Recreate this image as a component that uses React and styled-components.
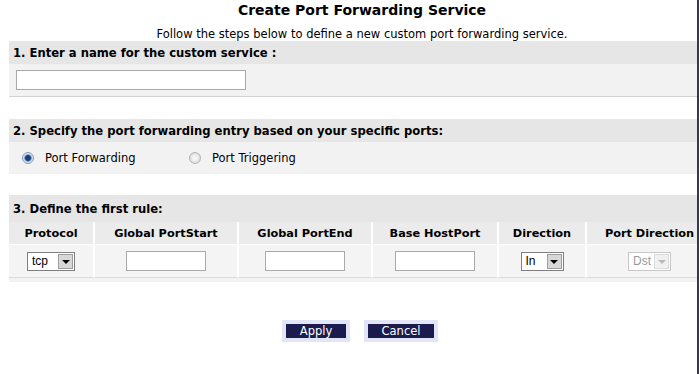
import React from 'react';
import styled, { createGlobalStyle } from 'styled-components';

const GlobalStyle = createGlobalStyle`
  html, body {
    margin: 0;
    padding: 0;
    background: #fff;
  }
  body {
    font-family: "DejaVu Sans", Verdana, sans-serif;
    font-size: 11.5px;
    color: #000;
  }
`;

const Page = styled.div`
  display: flex;
  height: 374px;
  width: 699px;
  overflow: hidden;
`;

const Main = styled.div`
  width: 688px;
  margin-left: 9px;
  display: flex;
  flex-direction: column;
  overflow: hidden;
`;

const Edge = styled.div`
  width: 2px;
  background: #343a4c;
`;

const Title = styled.h1`
  margin: 0;
  padding: 1px 0 0 18px;
  height: 23px;
  font-size: 14px;
  font-weight: bold;
  text-align: center;
  line-height: 18px;
`;

const Intro = styled.div`
  height: 14px;
  padding: 3px 0 0 18px;
  text-align: center;
  font-size: 11.5px;
  line-height: 14px;
`;

const Section = styled.section`
  margin-bottom: ${p => p.$gap || 0}px;
`;

const SectionHead = styled.div`
  height: ${p => p.$h || 23}px;
  background: #e6e6e6;
  display: flex;
  align-items: center;
  padding-left: 4px;
  font-weight: bold;
  font-size: 11.6px;
`;

const SectionBody = styled.div`
  background: #f2f2f2;
  height: ${p => p.$h}px;
  display: flex;
  align-items: center;
  padding-left: ${p => p.$pad || 0}px;
  border-bottom: ${p => (p.$line ? '1px solid #d2d2d2' : 'none')};
`;

const TextInput = styled.input`
  box-sizing: border-box;
  width: ${p => p.$w}px;
  height: ${p => p.$h || 20}px;
  border: 1px solid #a9a9a9;
  background: #fff;
  padding: 0 3px;
  margin: 0;
  font-family: "Liberation Sans", Arial, sans-serif;
  font-size: 12px;
`;

const RadioOption = styled.label`
  display: flex;
  align-items: center;
  gap: 11px;
  width: ${p => p.$w}px;
`;

const RadioDot = styled.span`
  box-sizing: border-box;
  width: 12px;
  height: 12px;
  border-radius: 50%;
  border: 1px solid ${p => (p.$on ? '#8597b0' : '#b4b4b4')};
  background: ${p =>
    p.$on
      ? 'radial-gradient(circle, #1b3f78 0 2.5px, #4d78b4 3px, #c5d2e4 4px, #eef2f8 5px)'
      : 'radial-gradient(circle, #f4f4f4 0 2px, #dcdcdc 5px)'};
`;

const Grid = styled.div`
  display: grid;
  grid-template-columns: 84px 144px 134px 126px 88px 127px;
  width: 703px;
  background: #f2f2f2;
  padding-bottom: 4px;
`;

const HeadCell = styled.div`
  height: 22px;
  display: flex;
  align-items: center;
  justify-content: center;
  background: #ebebeb;
  border-left: ${p => (p.$first ? 'none' : '2px solid #fff')};
  border-bottom: 1px solid #fff;
  font-weight: bold;
  font-size: 11.3px;
  white-space: nowrap;
`;

const DataCell = styled.div`
  height: 32px;
  display: flex;
  align-items: center;
  justify-content: center;
  background: #f4f4f4;
  border-left: ${p => (p.$first ? 'none' : '2px solid #fff')};
  border-bottom: 1px solid #dcdcdc;
`;

const SelectBox = styled.div`
  box-sizing: border-box;
  width: ${p => p.$w}px;
  height: 19px;
  border: 1px solid ${p => (p.$off ? '#c8c8c8' : '#7f7f7f')};
  background: #fff;
  display: flex;
  align-items: center;
  justify-content: space-between;
  padding: 1px 1px 1px 4px;
  font-family: "Liberation Sans", Arial, sans-serif;
  font-size: 12px;
  color: ${p => (p.$off ? '#9a9a9a' : '#000')};
`;

const ArrowBox = styled.span`
  box-sizing: border-box;
  width: 15px;
  height: 15px;
  display: flex;
  align-items: center;
  justify-content: center;
  background: ${p => (p.$off ? '#f0f0f0' : '#d8d8d8')};
  border: 1px solid ${p => (p.$off ? '#dcdcdc' : '#9c9c9c')};
  &::after {
    content: '';
    border-left: 4px solid transparent;
    border-right: 4px solid transparent;
    border-top: 4px solid ${p => (p.$off ? '#b8b8b8' : '#000')};
    margin-top: 1px;
  }
`;

const Actions = styled.div`
  display: flex;
  justify-content: center;
  gap: 14px;
  margin-top: 38px;
  padding-left: 14px;
`;

const Button = styled.button`
  box-sizing: border-box;
  width: ${p => p.$w}px;
  height: 22px;
  padding: 0;
  margin: 0;
  border: 4px solid #e2e5f5;
  background: #1b1b4d;
  color: #fff;
  font-family: "DejaVu Sans", Verdana, sans-serif;
  font-size: 11.5px;
  line-height: 14px;
  cursor: pointer;
`;

function Select({ value, width, disabled }) {
  return (
    <SelectBox $w={width} $off={disabled}>
      <span>{value}</span>
      <ArrowBox $off={disabled} />
    </SelectBox>
  );
}

const columns = ['Protocol', 'Global PortStart', 'Global PortEnd', 'Base HostPort', 'Direction', 'Port Direction'];

export default function App() {
  return (
    <>
      <GlobalStyle />
      <Page>
        <Main>
          <Title>Create Port Forwarding Service</Title>
          <Intro>Follow the steps below to define a new custom port forwarding service.</Intro>

          <Section $gap={22}>
            <SectionHead>1. Enter a name for the custom service :</SectionHead>
            <SectionBody $h={32} $pad={7} $line>
              <TextInput $w={230} $h={20} />
            </SectionBody>
          </Section>

          <Section $gap={21}>
            <SectionHead>2. Specify the port forwarding entry based on your specific ports:</SectionHead>
            <SectionBody $h={32} $pad={13}>
              <RadioOption $w={167}>
                <RadioDot $on />
                Port Forwarding
              </RadioOption>
              <RadioOption>
                <RadioDot />
                Port Triggering
              </RadioOption>
            </SectionBody>
          </Section>

          <Section>
            <SectionHead $h={27}>3. Define the first rule:</SectionHead>
            <Grid>
              {columns.map((c, i) => (
                <HeadCell key={c} $first={i === 0}>{c}</HeadCell>
              ))}
              <DataCell $first>
                <Select value="tcp" width={48} />
              </DataCell>
              <DataCell>
                <TextInput $w={80} />
              </DataCell>
              <DataCell>
                <TextInput $w={80} />
              </DataCell>
              <DataCell>
                <TextInput $w={80} />
              </DataCell>
              <DataCell>
                <Select value="In" width={43} />
              </DataCell>
              <DataCell>
                <Select value="Dst" width={43} disabled />
              </DataCell>
            </Grid>
          </Section>

          <Actions>
            <Button $w={68}>Apply</Button>
            <Button $w={74}>Cancel</Button>
          </Actions>
        </Main>
        <Edge />
      </Page>
    </>
  );
}
